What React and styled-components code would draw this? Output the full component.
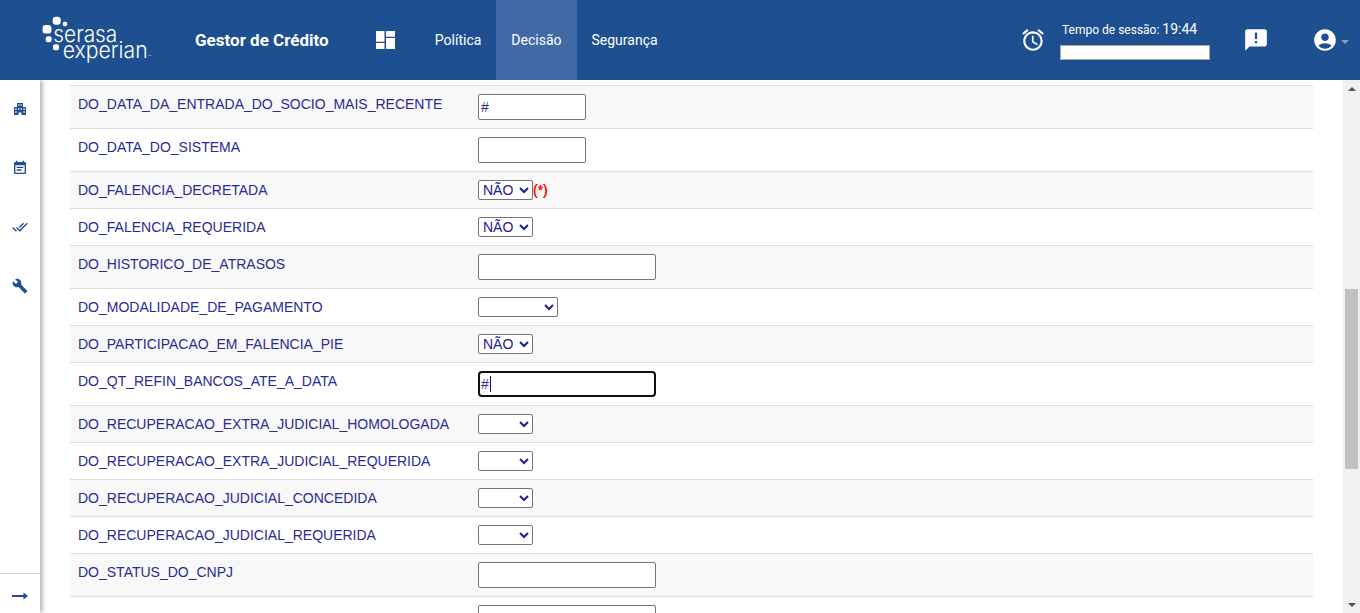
import React from 'react';
import styled, { createGlobalStyle } from 'styled-components';
import {
  MdAccessAlarm,
  MdAnnouncement,
  MdAccountCircle,
  MdEventNote,
  MdDoneAll,
  MdBuild,
} from 'react-icons/md';

const GlobalStyle = createGlobalStyle`
  html, body {
    margin: 0;
    padding: 0;
    height: 100%;
    overflow: hidden;
    background: #fff;
    font-family: "Liberation Sans", Arial, sans-serif;
  }
`;

const Page = styled.div`
  display: flex;
  flex-direction: column;
  height: 100vh;
  overflow: hidden;
`;

const Header = styled.header`
  display: flex;
  align-items: center;
  flex: 0 0 80px;
  height: 80px;
  padding-left: 42px;
  background: #1d4f91;
  color: #fff;
  z-index: 2;
`;

const LogoSvg = styled.svg`
  flex: 0 0 115px;
  width: 115px;
  height: 80px;
`;

const AppTitle = styled.div`
  margin-left: 38px;
  width: 181px;
  font-family: Roboto, sans-serif;
  font-size: 17px;
  font-weight: 700;
  white-space: nowrap;
`;

const QuiltIcon = styled.svg`
  flex: 0 0 19px;
  width: 19px;
  height: 18px;
  margin-right: 24.8px;
`;

const NavItem = styled.a`
  display: flex;
  align-items: center;
  height: 80px;
  padding: 0 15px;
  font-family: Roboto, sans-serif;
  font-size: 14px;
  background: ${p => (p.$active ? '#4069a6' : 'transparent')};
`;

const RightSide = styled.div`
  display: flex;
  align-items: center;
  margin-left: auto;
  padding-right: 11px;
`;

const Session = styled.div`
  display: flex;
  flex-direction: column;
  width: 150px;
  margin: 0 33px 0 14px;
`;

const SessionText = styled.div`
  padding-left: 2px;
  margin-bottom: 7px;
  font-family: Roboto, sans-serif;
  font-size: 12px;
  line-height: 16px;
  white-space: nowrap;
  b {
    font-weight: 400;
    font-size: 14px;
  }
`;

const SessionBar = styled.div`
  height: 13px;
  background: #fff;
  border: 1px solid #aaa;
`;

const MessageIcon = styled(MdAnnouncement)`
  margin-right: 43px;
`;

const UserCaret = styled.span`
  width: 0;
  height: 0;
  margin: 4px 0 0 3px;
  border-left: 4px solid transparent;
  border-right: 4px solid transparent;
  border-top: 4px solid #8f9bb0;
`;

const Body = styled.div`
  display: flex;
  flex: 1;
  min-height: 0;
`;

const Sidebar = styled.aside`
  display: flex;
  flex-direction: column;
  flex: 0 0 40px;
  width: 40px;
  background: #fff;
  color: #1d4f91;
  box-shadow: 2px 0 5px rgba(0, 0, 0, 0.35);
`;

const SideMenu = styled.nav`
  display: flex;
  flex-direction: column;
  flex: 1;
  padding-top: 19px;
`;

const SideItem = styled.div`
  display: flex;
  align-items: center;
  justify-content: center;
  height: 20px;
  margin-bottom: 39px;
`;

const SideFooter = styled.div`
  display: flex;
  justify-content: center;
  height: 40px;
  padding: 18px 0 0 0;
  box-sizing: border-box;
  border-top: 1px solid #ccc;
`;

const Main = styled.main`
  flex: 1;
  min-width: 0;
  padding: 5px 30px 0;
  overflow: hidden;
`;

const Row = styled.div`
  display: grid;
  grid-template-columns: 400px 1fr;
  padding: 8px;
  border-bottom: 1px solid #ddd;
  background: ${p => (p.$odd ? '#f8f8f8' : '#fff')};
  &:first-child {
    border-top: 1px solid #ddd;
  }
`;

const Label = styled.div`
  font-size: 14px;
  line-height: 20px;
  color: #2a2a95;
`;

const Field = styled.div`
  position: relative;
  display: flex;
  align-items: flex-start;
`;

const TextInput = styled.input`
  box-sizing: border-box;
  width: ${p => (p.$wide ? '178px' : '108px')};
  height: 26px;
  padding: 1px 2px;
  border: 1px solid #767676;
  border-radius: 2px;
  background: #fff;
  font-family: "Liberation Sans", Arial, sans-serif;
  font-size: 14px;
  color: #2a2a95;
  caret-color: transparent;
`;

const InputCaret = styled.span`
  position: absolute;
  left: 12px;
  top: 5px;
  width: 1px;
  height: 16px;
  background: #14148a;
`;

const Select = styled.select`
  box-sizing: border-box;
  width: ${p => (p.$wide ? '80px' : '55px')};
  height: 20px;
  border: 1px solid #767676;
  border-radius: 2px;
  background: #fff;
  font-family: "Liberation Sans", Arial, sans-serif;
  font-size: 14px;
  color: #20208e;
`;

const Required = styled.span`
  font-size: 14px;
  line-height: 20px;
  color: #f00;
  text-shadow: 0 0 0.5px #f00;
`;

const Scrollbar = styled.div`
  display: flex;
  flex-direction: column;
  align-items: center;
  flex: 0 0 17px;
  width: 17px;
  background: #f1f1f1;
`;

const ScrollArrow = styled.span`
  flex: 0 0 17px;
  display: flex;
  align-items: center;
  justify-content: center;
  &::after {
    content: '';
    border-left: 4px solid transparent;
    border-right: 4px solid transparent;
    ${p => (p.$up ? 'border-bottom' : 'border-top')}: 4px solid #505050;
  }
`;

const ScrollTrack = styled.div`
  flex: 1;
  width: 100%;
  padding-top: 192px;
  box-sizing: border-box;
`;

const ScrollThumb = styled.div`
  width: 13px;
  height: 180px;
  margin: 0 auto;
  background: #c1c1c1;
`;

const rows = [
  { label: 'DO_DATA_DA_ENTRADA_DO_SOCIO_MAIS_RECENTE', type: 'input', value: '#' },
  { label: 'DO_DATA_DO_SISTEMA', type: 'input' },
  { label: 'DO_FALENCIA_DECRETADA', type: 'select', value: 'NÃO', required: true },
  { label: 'DO_FALENCIA_REQUERIDA', type: 'select', value: 'NÃO' },
  { label: 'DO_HISTORICO_DE_ATRASOS', type: 'input', wide: true },
  { label: 'DO_MODALIDADE_DE_PAGAMENTO', type: 'select', wide: true },
  { label: 'DO_PARTICIPACAO_EM_FALENCIA_PIE', type: 'select', value: 'NÃO' },
  { label: 'DO_QT_REFIN_BANCOS_ATE_A_DATA', type: 'input', wide: true, value: '#', focus: true },
  { label: 'DO_RECUPERACAO_EXTRA_JUDICIAL_HOMOLOGADA', type: 'select' },
  { label: 'DO_RECUPERACAO_EXTRA_JUDICIAL_REQUERIDA', type: 'select' },
  { label: 'DO_RECUPERACAO_JUDICIAL_CONCEDIDA', type: 'select' },
  { label: 'DO_RECUPERACAO_JUDICIAL_REQUERIDA', type: 'select' },
  { label: 'DO_STATUS_DO_CNPJ', type: 'input', wide: true },
  { label: '', type: 'input', wide: true },
];

const Logo = () => (
  <LogoSvg viewBox="0 0 115 80">
    <g fill="#fff">
      <rect x="10.7" y="16.7" width="8" height="8" rx="3" />
      <rect x="20.8" y="21.8" width="4.4" height="4.4" rx="1.6" />
      <rect x="0.6" y="25" width="8.8" height="8.6" rx="3.2" />
      <rect x="3.7" y="36.3" width="6" height="6" rx="2.2" />
      <rect x="11" y="44.3" width="6" height="6" rx="2" />
    </g>
    <g fill="#fff" fontFamily="Inter, sans-serif" fontWeight="300" fontSize="23">
      <text x="11.3" y="42" textLength="64" lengthAdjust="spacingAndGlyphs">serasa</text>
      <text x="20.7" y="58.4" textLength="85" lengthAdjust="spacingAndGlyphs">experian</text>
      <text x="106.5" y="58.4" fontSize="4">™</text>
    </g>
  </LogoSvg>
);

const Quilt = () => (
  <QuiltIcon viewBox="0 0 19 18">
    <path fill="#fff" d="M0 0h8.5v10.8H0zM10 0h9v5.8h-9zM10 7h9v11h-9zM0 12h8.5v6H0z" />
  </QuiltIcon>
);

const BuildingIcon = () => (
  <svg width="12" height="12" viewBox="0 0 12 12">
    <path
      fill="currentColor"
      fillRule="evenodd"
      d="M3 0h6v4h3v8H7.5V9.5h-3V12H0V4h3zM4.2 1.2v1.6h1.2V1.2zM6.6 1.2v1.6h1.2V1.2zM1.2 5.2v1.6h1.4V5.2zM4.2 5.2v1.6h1.2V5.2zM6.6 5.2v1.6h1.2V5.2zM9.4 5.2v1.6h1.4V5.2zM1.2 8.2v1.6h1.4V8.2zM9.4 8.2v1.6h1.4V8.2z"
    />
  </svg>
);

const ArrowIcon = () => (
  <svg width="16" height="8" viewBox="0 0 16 8">
    <path fill="currentColor" d="M0 3h11.5V.5L16 4l-4.5 3.5V5H0z" />
  </svg>
);

const FormRow = ({ row, odd }) => (
  <Row $odd={odd}>
    <Label>{row.label}</Label>
    <Field>
      {row.type === 'input' ? (
        <TextInput $wide={row.wide} defaultValue={row.value} autoFocus={row.focus} />
      ) : (
        <Select $wide={row.wide} defaultValue={row.value || ''}>
          <option value="" />
          <option value="NÃO">NÃO</option>
          <option value="SIM">SIM</option>
        </Select>
      )}
      {row.focus && <InputCaret />}
      {row.required && <Required>(*)</Required>}
    </Field>
  </Row>
);

export default function App() {
  return (
    <Page>
      <GlobalStyle />
      <Header>
        <Logo />
        <AppTitle>Gestor de Crédito</AppTitle>
        <Quilt />
        <NavItem>Política</NavItem>
        <NavItem $active>Decisão</NavItem>
        <NavItem>Segurança</NavItem>
        <RightSide>
          <MdAccessAlarm size={26} />
          <Session>
            <SessionText>Tempo de sessão: <b>19:44</b></SessionText>
            <SessionBar />
          </Session>
          <MessageIcon size={26} />
          <MdAccountCircle size={26} />
          <UserCaret />
        </RightSide>
      </Header>
      <Body>
        <Sidebar>
          <SideMenu>
            <SideItem><BuildingIcon /></SideItem>
            <SideItem><MdEventNote size={16} /></SideItem>
            <SideItem><MdDoneAll size={16} /></SideItem>
            <SideItem><MdBuild size={16} /></SideItem>
          </SideMenu>
          <SideFooter><ArrowIcon /></SideFooter>
        </Sidebar>
        <Main>
          {rows.map((row, i) => (
            <FormRow key={i} row={row} odd={i % 2 === 0} />
          ))}
        </Main>
        <Scrollbar>
          <ScrollArrow $up />
          <ScrollTrack><ScrollThumb /></ScrollTrack>
          <ScrollArrow />
        </Scrollbar>
      </Body>
    </Page>
  );
}
